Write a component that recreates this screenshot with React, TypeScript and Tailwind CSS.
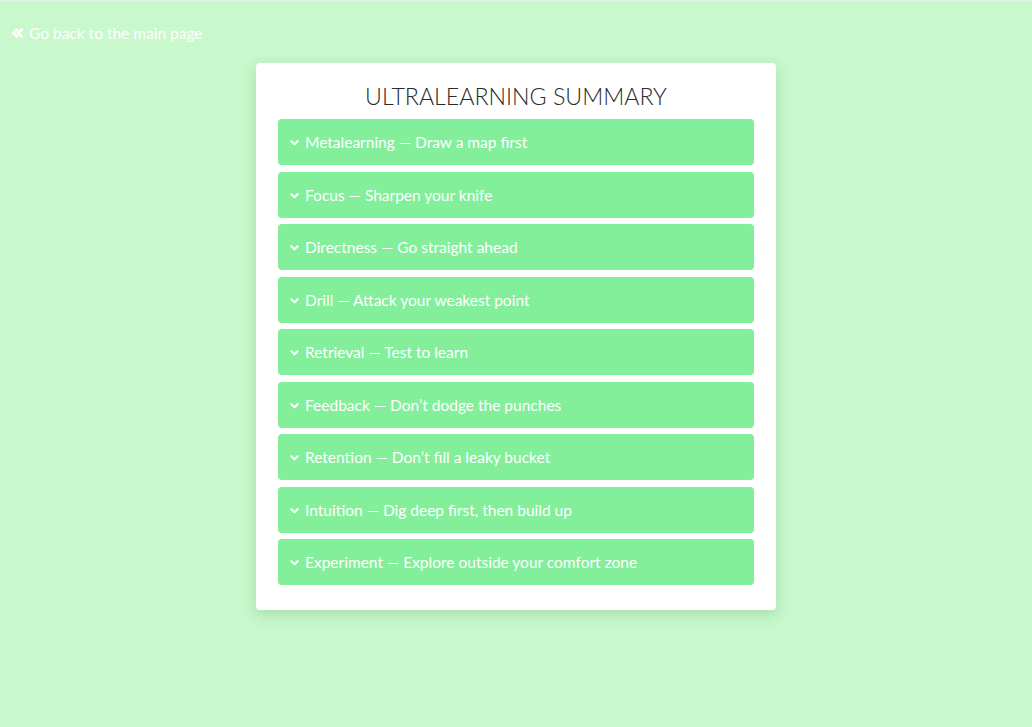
import React from 'react';

const ITEMS = [
  ['Metalearning', 'Draw a map first'],
  ['Focus', 'Sharpen your knife'],
  ['Directness', 'Go straight ahead'],
  ['Drill', 'Attack your weakest point'],
  ['Retrieval', 'Test to learn'],
  ['Feedback', 'Don\u2019t dodge the punches'],
  ['Retention', 'Don\u2019t fill a leaky bucket'],
  ['Intuition', 'Dig deep first, then build up'],
  ['Experiment', 'Explore outside your comfort zone'],
];

const Chevron = () => (
  <svg width="9" height="8" viewBox="0 0 10 8" className="shrink-0">
    <path d="M1.5 2 L5 5.5 L8.5 2" fill="none" stroke="white" strokeWidth="2.3" strokeLinecap="round" strokeLinejoin="round" />
  </svg>
);

const DoubleLeft = () => (
  <svg width="13" height="10" viewBox="0 0 13 10">
    <path d="M6 1.5 L2.3 5 L6 8.5 M10.8 1.5 L7.1 5 L10.8 8.5" fill="none" stroke="white" strokeWidth="2.8" strokeLinecap="round" strokeLinejoin="round" />
  </svg>
);

export default function App() {
  return (
    <div
      className="min-h-[727px] bg-[#c8f8cc] border-t border-[#e6eee6]"
      style={{ fontFamily: 'Lato, "Noto Sans", sans-serif' }}
    >
      <div className="pl-[11px] pt-[19px] h-[62px]">
        <a className="inline-flex items-center gap-[5px] text-white text-[15.5px] leading-[18px] cursor-pointer">
          <DoubleLeft />
          <span>Go back to the main page</span>
        </a>
      </div>

      <div className="mx-auto w-[520px] bg-white rounded-[4px] shadow-[0_4px_14px_rgba(60,140,70,0.25)] px-[22px] pt-[19px] pb-[25px]">
        <h1 className="text-center text-[23.2px] leading-[28px] font-light text-[#2a2a2a] mb-[9px]">
          ULTRALEARNING SUMMARY
        </h1>
        <div className="flex flex-col gap-[6.5px]">
          {ITEMS.map(([name, motto]) => (
            <div
              key={name}
              className="h-[46px] bg-[#83ef9b] rounded-[4px] flex items-center gap-[6px] pl-[12px] pt-[2px] text-white text-[15.5px]"
            >
              <Chevron />
              <span>
                {name} — {motto}
              </span>
            </div>
          ))}
        </div>
      </div>
    </div>
  );
}
